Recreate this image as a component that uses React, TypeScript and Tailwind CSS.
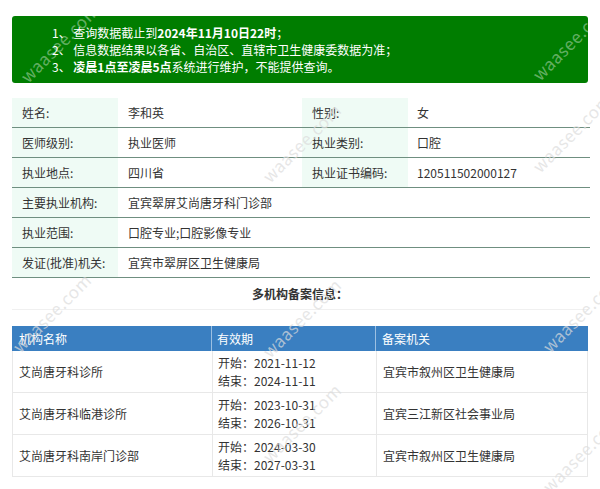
import React from "react";

type InfoCell = { label: string; value: string };

// Rows of the doctor-record table: two pairs per row, or one wide pair.
const INFO_ROWS: InfoCell[][] = [
  [
    { label: "姓名:", value: "李和英" },
    { label: "性别:", value: "女" },
  ],
  [
    { label: "医师级别:", value: "执业医师" },
    { label: "执业类别:", value: "口腔" },
  ],
  [
    { label: "执业地点:", value: "四川省" },
    { label: "执业证书编码:", value: "120511502000127" },
  ],
  [{ label: "主要执业机构:", value: "宜宾翠屏艾尚唐牙科门诊部" }],
  [{ label: "执业范围:", value: "口腔专业;口腔影像专业" }],
  [{ label: "发证(批准)机关:", value: "宜宾市翠屏区卫生健康局" }],
];

type Filing = { org: string; start: string; end: string; office: string };

const FILINGS: Filing[] = [
  { org: "艾尚唐牙科诊所", start: "2021-11-12", end: "2024-11-11", office: "宜宾市叙州区卫生健康局" },
  { org: "艾尚唐牙科临港诊所", start: "2023-10-31", end: "2026-10-31", office: "宜宾三江新区社会事业局" },
  { org: "艾尚唐牙科南岸门诊部", start: "2024-03-30", end: "2027-03-31", office: "宜宾市叙州区卫生健康局" },
];

// faint diagonal site marks sitting over the page
const MARKS = [
  { left: 8, top: 30, light: true },
  { left: 520, top: 28, light: true },
  { left: 250, top: 130, light: false },
  { left: 520, top: 120, light: false },
  { left: 0, top: 300, light: false },
  { left: 250, top: 305, light: false },
  { left: 530, top: 300, light: false },
  { left: 250, top: 410, light: false },
  { left: 530, top: 440, light: false },
];

function InfoTable() {
  return (
    <div className="mt-[15px] grid grid-cols-[106px_184px_106px_182px]">
      {INFO_ROWS.map((row, i) =>
        row.length === 2 ? (
          <React.Fragment key={i}>
            <div className="flex h-[30px] items-center border-b border-[#6f8f80] bg-[#effbf5] pl-[10px]">
              {row[0].label}
            </div>
            <div className="flex h-[30px] items-center border-b border-[#6f8f80] pl-[10px]">
              {row[0].value}
            </div>
            <div className="flex h-[30px] items-center border-b border-[#6f8f80] bg-[#effbf5] pl-[10px]">
              {row[1].label}
            </div>
            <div className="flex h-[30px] items-center border-b border-[#6f8f80] pl-[9px]">
              {row[1].value}
            </div>
          </React.Fragment>
        ) : (
          <React.Fragment key={i}>
            <div className="flex h-[30px] items-center border-b border-[#6f8f80] bg-[#effbf5] pl-[10px]">
              {row[0].label}
            </div>
            <div className="col-span-3 flex h-[30px] items-center border-b border-[#6f8f80] pl-[10px]">
              {row[0].value}
            </div>
          </React.Fragment>
        )
      )}
    </div>
  );
}

function FilingTable() {
  return (
    <div className="mt-4">
      <div className="grid h-[25px] grid-cols-[199px_164px_215px] bg-[#3a7fc1] text-white">
        <div className="flex items-center pl-[7px]">机构名称</div>
        <div className="flex items-center border-l border-[#9cc0e2] pl-[5px]">有效期</div>
        <div className="flex items-center border-l border-[#9cc0e2] pl-[6px]">备案机关</div>
      </div>
      {FILINGS.map((f) => (
        <div
          key={f.org}
          className="grid h-[42px] grid-cols-[199px_164px_215px] border-x border-b border-[#e8e8e8]"
        >
          <div className="flex items-center pl-[6px]">{f.org}</div>
          <div className="flex flex-col justify-center border-l border-[#e8e8e8] pl-[5px] leading-[18px]">
            <span>开始：{f.start}</span>
            <span>结束：{f.end}</span>
          </div>
          <div className="flex items-center border-l border-[#e8e8e8] pl-[6px]">{f.office}</div>
        </div>
      ))}
    </div>
  );
}

export default function App() {
  return (
    <div
      className="relative h-[489px] w-[600px] overflow-hidden bg-white px-3 pt-4 text-[12px] text-[#333]"
      style={{ fontFamily: '"Microsoft YaHei", "Noto Sans CJK SC", sans-serif' }}
    >
      <div className="h-[67px] rounded-[3px] bg-[#007d00] pl-10 pt-2 leading-[17px] text-white">
        <p>
          1、 查询数据截止到<b>2024年11月10日22时</b>；
        </p>
        <p>2、 信息数据结果以各省、自治区、直辖市卫生健康委数据为准；</p>
        <p>
          3、 <b>凌晨1点至凌晨5点</b>系统进行维护，不能提供查询。
        </p>
      </div>

      <InfoTable />

      <div className="flex h-8 items-center justify-center border-b border-[#f0f0f0] font-bold">
        多机构备案信息：
      </div>

      <FilingTable />

      {MARKS.map((m, i) => (
        <span
          key={i}
          className={`pointer-events-none absolute -rotate-45 text-[17px] tracking-wide ${
            m.light ? "text-white/40" : "text-[#dcdcdc]/70"
          }`}
          style={{ left: m.left, top: m.top }}
        >
          waasee.com
        </span>
      ))}
    </div>
  );
}
